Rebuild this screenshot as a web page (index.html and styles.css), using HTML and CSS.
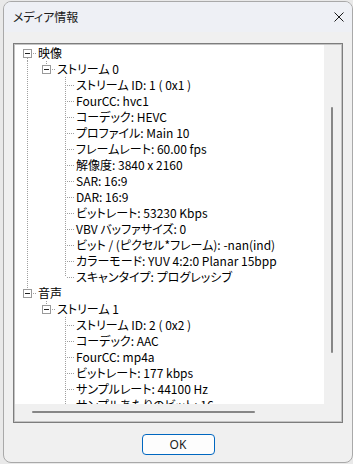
FILE: index.html
```html
<!DOCTYPE html>
<html lang="ja">
<head>
<meta charset="utf-8">
<title>メディア情報</title>
<link rel="stylesheet" href="styles.css">
</head>
<body>
<div class="window">
  <div class="titlebar">
    <span class="title">メディア情報</span>
    <span class="close"><svg width="10" height="10" viewBox="0 0 10 10"><path d="M0.5 0.5L9.5 9.5M9.5 0.5L0.5 9.5" stroke="#1a1a1a" stroke-width="1" fill="none"/></svg></span>
  </div>
  <div class="body">
    <div class="treebox">
      <div class="tree">
        <div class="row"><span class="i c first"><b class="box"></b></span><span class="t">映像</span></div>
        <div class="row"><span class="i v"></span><span class="i c last"><b class="box"></b></span><span class="t">ストリーム 0</span></div>
        <div class="row"><span class="i v"></span><span class="i"></span><span class="i c"></span><span class="t">ストリーム ID: 1 ( 0x1 )</span></div>
        <div class="row"><span class="i v"></span><span class="i"></span><span class="i c"></span><span class="t">FourCC: hvc1</span></div>
        <div class="row"><span class="i v"></span><span class="i"></span><span class="i c"></span><span class="t">コーデック: HEVC</span></div>
        <div class="row"><span class="i v"></span><span class="i"></span><span class="i c"></span><span class="t">プロファイル: Main 10</span></div>
        <div class="row"><span class="i v"></span><span class="i"></span><span class="i c"></span><span class="t">フレームレート: 60.00 fps</span></div>
        <div class="row"><span class="i v"></span><span class="i"></span><span class="i c"></span><span class="t">解像度: 3840 x 2160</span></div>
        <div class="row"><span class="i v"></span><span class="i"></span><span class="i c"></span><span class="t">SAR: 16:9</span></div>
        <div class="row"><span class="i v"></span><span class="i"></span><span class="i c"></span><span class="t">DAR: 16:9</span></div>
        <div class="row"><span class="i v"></span><span class="i"></span><span class="i c"></span><span class="t">ビットレート: 53230 Kbps</span></div>
        <div class="row"><span class="i v"></span><span class="i"></span><span class="i c"></span><span class="t">VBV バッファサイズ: 0</span></div>
        <div class="row"><span class="i v"></span><span class="i"></span><span class="i c"></span><span class="t">ビット / (ピクセル*フレーム): -nan(ind)</span></div>
        <div class="row"><span class="i v"></span><span class="i"></span><span class="i c"></span><span class="t">カラーモード: YUV 4:2:0 Planar 15bpp</span></div>
        <div class="row"><span class="i v"></span><span class="i"></span><span class="i c last"></span><span class="t">スキャンタイプ: プログレッシブ</span></div>
        <div class="row"><span class="i c last"><b class="box"></b></span><span class="t">音声</span></div>
        <div class="row"><span class="i"></span><span class="i c last"><b class="box"></b></span><span class="t">ストリーム 1</span></div>
        <div class="row"><span class="i"></span><span class="i"></span><span class="i c"></span><span class="t">ストリーム ID: 2 ( 0x2 )</span></div>
        <div class="row"><span class="i"></span><span class="i"></span><span class="i c"></span><span class="t">コーデック: AAC</span></div>
        <div class="row"><span class="i"></span><span class="i"></span><span class="i c"></span><span class="t">FourCC: mp4a</span></div>
        <div class="row"><span class="i"></span><span class="i"></span><span class="i c"></span><span class="t">ビットレート: 177 kbps</span></div>
        <div class="row"><span class="i"></span><span class="i"></span><span class="i c"></span><span class="t">サンプルレート: 44100 Hz</span></div>
        <div class="row"><span class="i"></span><span class="i"></span><span class="i c"></span><span class="t">サンプルあたりのビット: 16</span></div>
      </div>
      <div class="vscroll"><div class="vthumb"></div></div>
      <div class="hscroll"><div class="hthumb"></div></div>
      <div class="corner"></div>
    </div>
    <div class="buttons"><button class="ok" type="button">OK</button></div>
  </div>
</div>
</body>
</html>
```

FILE: styles.css
```css
html, body {
  margin: 0;
  padding: 0;
}
body {
  width: 353px;
  height: 464px;
  overflow: hidden;
  background: #e9e9e9;
  font-family: "Noto Sans CJK JP", "Noto Sans", sans-serif;
  font-feature-settings: "palt";
}
.window {
  box-sizing: border-box;
  margin: 1px 0 0 3px;
  width: 350px;
  height: 462px;
  border: 1px solid #a9a9a9;
  border-radius: 8px;
  background: #f0f0f0;
  overflow: hidden;
  display: flex;
  flex-direction: column;
}
.titlebar {
  height: 30px;
  flex: none;
  display: flex;
  align-items: center;
  justify-content: space-between;
  padding: 0 8px 0 9px;
  background: #eef0f5;
}
.title {
  font-size: 12px;
  color: #1a1a1a;
  line-height: 16px;
}
.close {
  display: flex;
  width: 10px;
  height: 10px;
}
.body {
  flex: 1;
  padding: 11px 9px 0 9px;
  display: flex;
  flex-direction: column;
}
.treebox {
  box-sizing: border-box;
  height: 380px;
  border: 1px solid #7d7d7d;
  box-shadow: inset 0 0 0 1px #c4c4c4;
  padding: 1px;
  display: grid;
  grid-template-columns: 1fr 17px;
  grid-template-rows: 1fr 17px;
  background: #f0f0f0;
}
.tree {
  background: #fff;
  overflow: hidden;
  padding-left: 2px;
  font-size: 12px;
  color: #000;
}
.row {
  display: flex;
  height: 16px;
  align-items: center;
  white-space: nowrap;
}
.i {
  flex: none;
  width: 19px;
  height: 16px;
  position: relative;
}
.i.v::before,
.i.c::before {
  content: "";
  position: absolute;
  left: 10px;
  width: 1px;
  top: 0;
  bottom: 0;
  background: repeating-linear-gradient(to bottom, #a0a0a0 0 1px, transparent 1px 2px);
}
.i.c.first::before {
  top: 9px;
}
.i.c.last::before {
  bottom: 8px;
}
.i.c::after {
  content: "";
  position: absolute;
  left: 12px;
  right: 0;
  top: 8px;
  height: 1px;
  background: repeating-linear-gradient(to right, #a0a0a0 0 1px, transparent 1px 2px);
}
.box {
  position: absolute;
  left: 6px;
  top: 4px;
  width: 9px;
  height: 9px;
  box-sizing: border-box;
  border: 1px solid #9a9a9a;
  background: #fff;
  z-index: 1;
}
.box::after {
  content: "";
  position: absolute;
  left: 1px;
  width: 5px;
  top: 3px;
  height: 1px;
  background: #222;
}
.t {
  margin-left: 2px;
  line-height: 16px;
}
.vscroll {
  background: #f0f0f0;
  padding-top: 62px;
}
.vthumb {
  margin-left: 7px;
  width: 2px;
  height: 246px;
  border-radius: 1px;
  background: #868686;
}
.hscroll {
  background: #f0f0f0;
  padding-top: 7px;
}
.hthumb {
  margin-left: 17px;
  width: 223px;
  height: 2px;
  border-radius: 1px;
  background: #868686;
}
.corner {
  background: #f0f0f0;
}
.buttons {
  display: flex;
  justify-content: center;
  margin-top: 11px;
}
.ok {
  box-sizing: border-box;
  width: 73px;
  height: 21px;
  border: 1px solid #0067c0;
  border-radius: 4px;
  background: #fdfdfd;
  font-family: "Noto Sans", sans-serif;
  font-size: 12px;
  color: #1a1a1a;
  padding: 0;
  line-height: 18px;
}
```
